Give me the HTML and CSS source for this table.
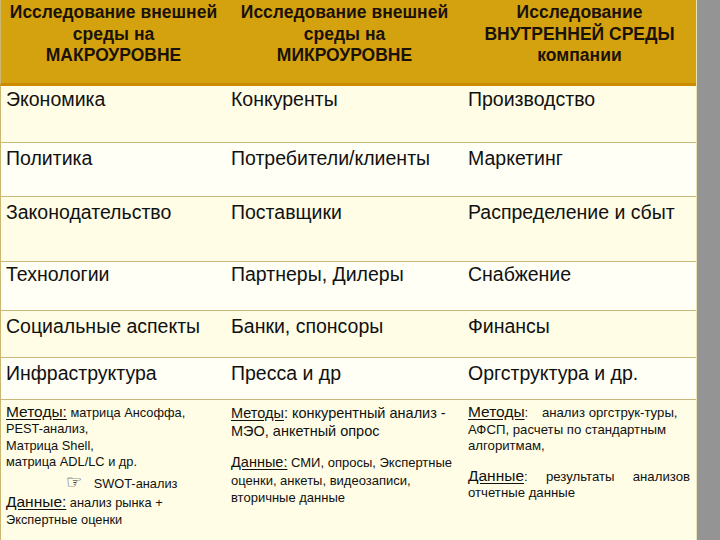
FILE: index.html
```html
<!DOCTYPE html>
<html lang="ru">
<head>
<meta charset="utf-8">
<title>Исследование среды</title>
<link rel="stylesheet" href="styles.css">
</head>
<body>
<div class="slide">
  <div class="row head">
    <div class="cell">Исследование внешней<br>среды на<br>МАКРОУРОВНЕ</div>
    <div class="cell">Исследование внешней<br>среды на<br>МИКРОУРОВНЕ</div>
    <div class="cell">Исследование<br>ВНУТРЕННЕЙ СРЕДЫ<br>компании</div>
  </div>
  <div class="row r1 cream">
    <div class="cell">Экономика</div>
    <div class="cell">Конкуренты</div>
    <div class="cell">Производство</div>
  </div>
  <div class="row r2 white">
    <div class="cell">Политика</div>
    <div class="cell">Потребители/клиенты</div>
    <div class="cell">Маркетинг</div>
  </div>
  <div class="row r3 cream">
    <div class="cell">Законодательство</div>
    <div class="cell">Поставщики</div>
    <div class="cell">Распределение и сбыт</div>
  </div>
  <div class="row r4 white">
    <div class="cell">Технологии</div>
    <div class="cell">Партнеры, Дилеры</div>
    <div class="cell">Снабжение</div>
  </div>
  <div class="row r5 cream">
    <div class="cell">Социальные аспекты</div>
    <div class="cell">Банки, спонсоры</div>
    <div class="cell">Финансы</div>
  </div>
  <div class="row r6 white">
    <div class="cell">Инфраструктура</div>
    <div class="cell">Пресса и др</div>
    <div class="cell">Оргструктура и др.</div>
  </div>
  <div class="row r7 cream methods">
    <div class="cell c1">
      <p><span class="lbl">Методы:</span> матрица Ансоффа,<br>PEST-анализ,<br>Матрица Shell,<br>матрица ADL/LC и др.</p>
      <p class="swot"><span class="hand">☞</span> SWOT-анализ</p>
      <p><span class="lbl">Данные:</span> анализ рынка +<br>Экспертные оценки</p>
    </div>
    <div class="cell c2">
      <p class="big"><span class="lbl">Методы</span>: конкурентный анализ -<br>МЭО, анкетный опрос</p>
      <p class="gap"><span class="lbl">Данные:</span> СМИ, опросы, Экспертные<br>оценки, анкеты, видеозаписи,<br>вторичные данные</p>
    </div>
    <div class="cell c3">
      <p><span class="lbl">Методы</span>: <span class="wide">анализ оргструк-туры,</span><br>АФСП, расчеты по стандартным<br>алгоритмам,</p>
      <p class="gap just"><span class="lbl">Данные</span>: результаты анализов отчетные данные</p>
    </div>
  </div>
</div>
</body>
</html>
```
FILE: styles.css
```css
html, body {
  margin: 0;
  padding: 0;
}
body {
  width: 720px;
  height: 540px;
  overflow: hidden;
  background: linear-gradient(90deg, #a2a2a2, #949494);
  font-family: "Liberation Sans", Arial, sans-serif;
  color: #111;
}
.slide {
  width: 697px;
  height: 540px;
  display: flex;
  flex-direction: column;
  border-right: 1px solid #e9e3b8;
  box-sizing: border-box;
}
.row {
  display: grid;
  grid-template-columns: 225px 237px 1fr;
  border-left: 1px solid #c9b670;
  box-sizing: border-box;
}
.head {
  height: 86px;
  background: #d5a20f;
  border-bottom: 3px solid #cc8b00;
  font-weight: bold;
  font-size: 17.5px;
  line-height: 21.5px;
  color: #1a1208;
  text-align: center;
}
.head .cell {
  padding-top: 2px;
}
.cream { background: #fffde6; }
.white { background: #fffff6; }
.r1, .r2, .r3, .r4, .r5, .r6 {
  font-size: 19.5px;
  line-height: 22px;
  border-bottom: 1px solid #c9b77a;
}
.r1 .cell, .r2 .cell, .r3 .cell, .r4 .cell, .r5 .cell, .r6 .cell {
  padding: 2px 0 0 5px;
}
.r1 { height: 57px; }
.r2 { height: 54px; }
.r3 { height: 65px; }
.r4 { height: 49px; }
.r5 { height: 47px; }
.r6 { height: 42px; }
.r2 .cell, .r3 .cell, .r5 .cell, .r6 .cell { padding-top: 4px; }
.r4 .cell { padding-top: 1px; }
.methods {
  flex: 1;
  font-size: 12.8px;
  line-height: 16.3px;
}
.methods .cell {
  padding: 4px 8px 0 5px;
}
.methods p {
  margin: 0;
}
.lbl {
  font-size: 15.5px;
  text-decoration: underline;
  text-underline-offset: 2px;
}
.swot {
  margin: 4px 0 2px !important;
  padding-left: 60px;
}
.hand {
  font-family: "DejaVu Sans", sans-serif;
  font-size: 18px;
  margin-right: 8px;
  line-height: 16px;
}
.c2 {
  font-size: 13px;
  line-height: 17.5px;
}
.c2 .lbl { font-size: 14.5px; }
.c2 .big {
  font-size: 14.5px;
  line-height: 18px;
}
.c2 .gap { margin-top: 14px; }
.c3 {
  font-size: 13.2px;
  line-height: 16.5px;
}
.c3 .gap { margin-top: 13px; }
.c3 .wide { margin-left: 10px; }
.just {
  text-align: justify;
  width: 222px;
}
```
